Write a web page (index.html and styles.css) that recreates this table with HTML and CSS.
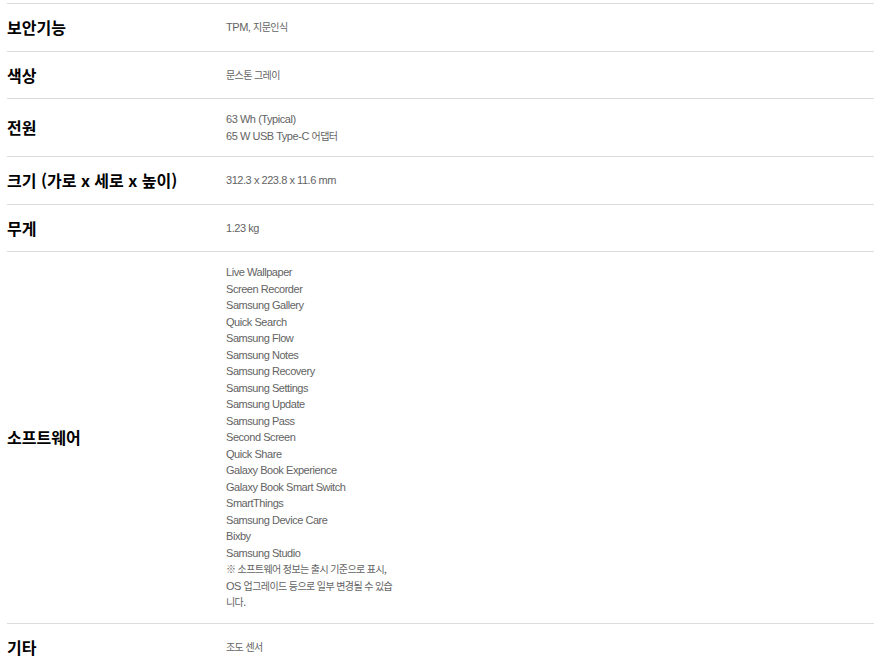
FILE: index.html
```html
<!DOCTYPE html>
<html lang="ko">
<head>
<meta charset="utf-8">
<title>사양</title>
<link rel="stylesheet" href="styles.css">
</head>
<body>
<div class="spec">
  <div class="row">
    <div class="label">보안기능</div>
    <div class="value"><p>TPM, <span class="ko">지문인식</span></p></div>
  </div>
  <div class="row">
    <div class="label">색상</div>
    <div class="value"><p><span class="ko">문스톤 그레이</span></p></div>
  </div>
  <div class="row">
    <div class="label">전원</div>
    <div class="value"><p>63 Wh (Typical)</p><p>65 W USB Type-C <span class="ko">어댑터</span></p></div>
  </div>
  <div class="row">
    <div class="label">크기 (가로 x 세로 x 높이)</div>
    <div class="value"><p>312.3 x 223.8 x 11.6 mm</p></div>
  </div>
  <div class="row">
    <div class="label">무게</div>
    <div class="value"><p>1.23 kg</p></div>
  </div>
  <div class="row">
    <div class="label">소프트웨어</div>
    <div class="value">
      <p>Live Wallpaper</p>
      <p>Screen Recorder</p>
      <p>Samsung Gallery</p>
      <p>Quick Search</p>
      <p>Samsung Flow</p>
      <p>Samsung Notes</p>
      <p>Samsung Recovery</p>
      <p>Samsung Settings</p>
      <p>Samsung Update</p>
      <p>Samsung Pass</p>
      <p>Second Screen</p>
      <p>Quick Share</p>
      <p>Galaxy Book Experience</p>
      <p>Galaxy Book Smart Switch</p>
      <p>SmartThings</p>
      <p>Samsung Device Care</p>
      <p>Bixby</p>
      <p>Samsung Studio</p>
      <p class="note"><span class="ko">※ 소프트웨어 정보는 출시 기준으로 표시,</span><br>OS <span class="ko">업그레이드 등으로 일부 변경될 수 있습</span><br><span class="ko">니다.</span></p>
    </div>
  </div>
  <div class="row">
    <div class="label">기타</div>
    <div class="value"><p><span class="ko">조도 센서</span></p></div>
  </div>
</div>
</body>
</html>
```
FILE: styles.css
```css
html, body {
  margin: 0;
  padding: 0;
  background: #fff;
}
.spec {
  width: 867px;
  margin: 3px 0 0 7px;
}
.row {
  display: flex;
  align-items: center;
  border-top: 1px solid #dcdcdc;
  padding: 12px 0;
}
.label {
  width: 219px;
  flex: none;
  font-family: "Noto Sans CJK KR", "Noto Sans", sans-serif;
  font-weight: 700;
  font-size: 16px;
  line-height: 22.5px;
  color: #000;
}
.value {
  flex: 1;
  font-family: "Liberation Sans", "Noto Sans CJK KR", sans-serif;
  font-size: 11px;
  letter-spacing: -0.45px;
  line-height: 16.5px;
  color: #636363;
}
.value p {
  margin: 0;
}
.ko {
  font-family: "Noto Sans CJK KR", sans-serif;
  font-size: 10px;
  letter-spacing: -0.6px;
}
```
